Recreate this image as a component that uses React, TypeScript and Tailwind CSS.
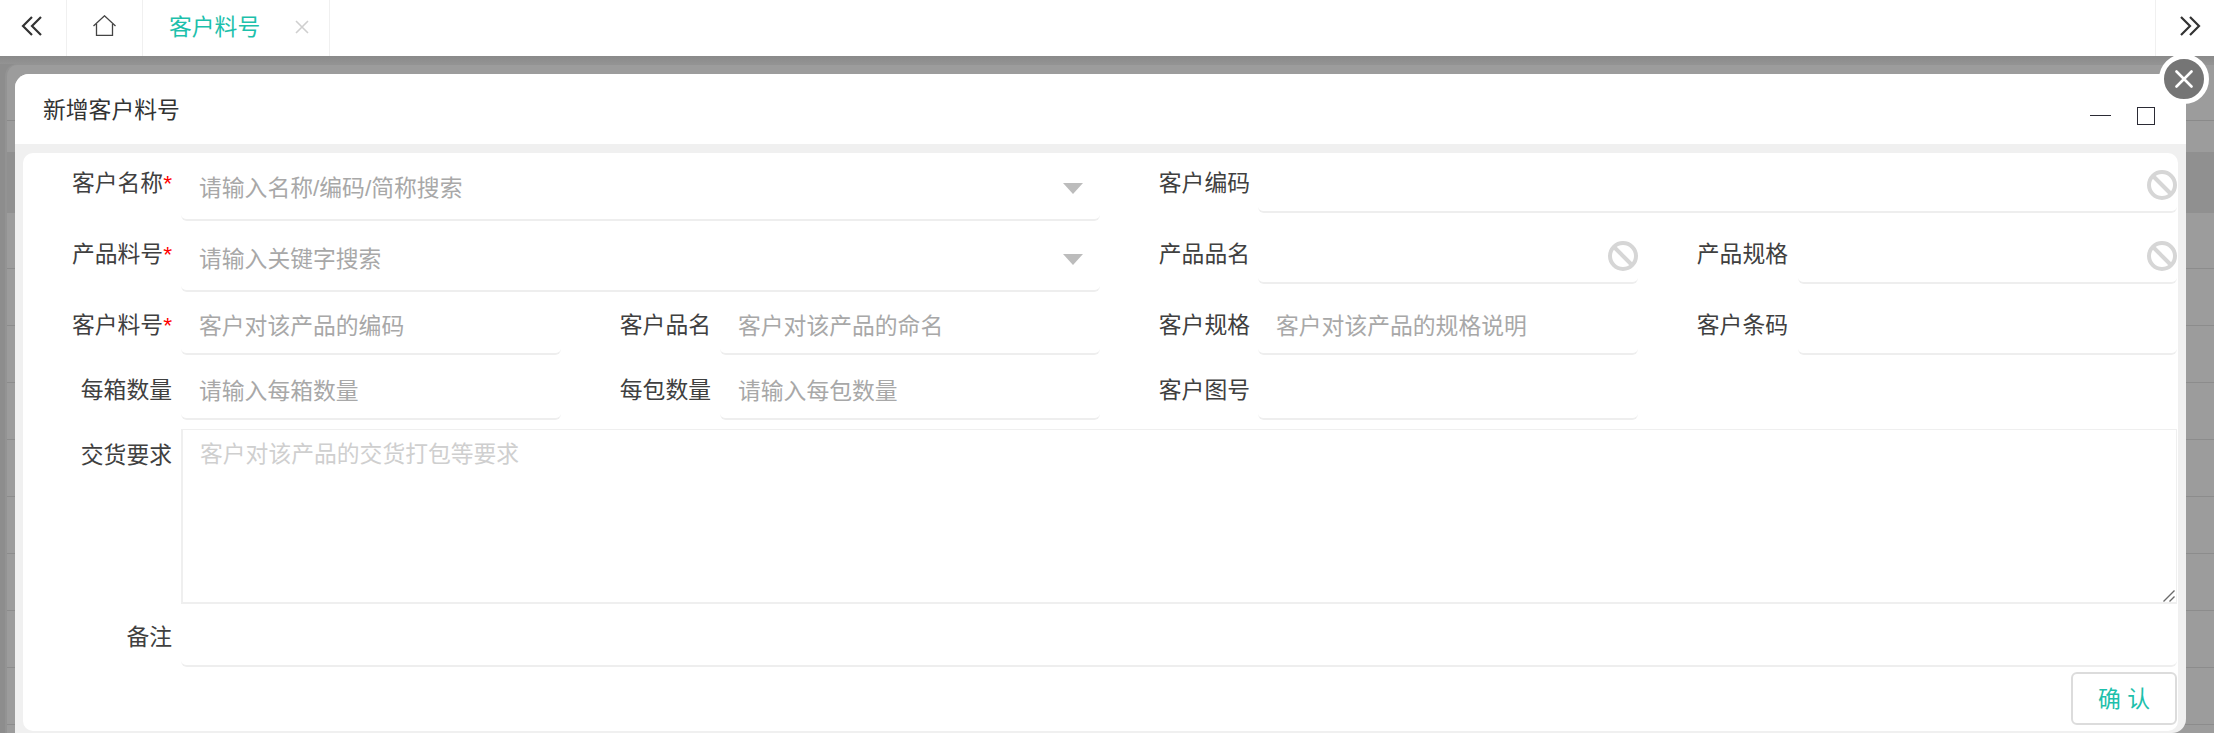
import React from "react";

const inputCls =
  "w-full min-w-0 flex-1 bg-transparent outline-none text-[22.8px] leading-[32px] h-[32px] text-[#333] placeholder:text-[#a8a8a8]";

function Label({ text, star, className }: { text: string; star?: boolean; className: string }) {
  return (
    <div className={"shrink-0 text-right text-[22.8px] leading-[32px] text-[#404040] " + className}>
      {text}
      {star && <span className="text-[#f00] font-['Liberation_Sans',sans-serif]">*</span>}
    </div>
  );
}

function Forbidden({ className }: { className: string }) {
  return (
    <svg viewBox="0 0 30 30" className={"w-[30px] h-[30px] shrink-0 " + className} fill="none" stroke="#d6d6d6" strokeWidth="4">
      <circle cx="15" cy="15" r="13" />
      <path d="M6 6 L24 24" />
    </svg>
  );
}

function Caret({ className }: { className: string }) {
  return (
    <svg viewBox="0 0 20 11" className={"w-[20px] h-[11px] shrink-0 mr-[17px] " + className} fill="#bcbcbc">
      <path d="M0 0 H20 L10 11 Z" />
    </svg>
  );
}

function Field({ className, children }: { className: string; children: React.ReactNode }) {
  return <div className={"flex items-start border-b-2 border-[#eeeeee] rounded-b-md " + className}>{children}</div>;
}

function Chevrons({ dir }: { dir: "l" | "r" }) {
  return (
    <svg viewBox="0 0 21 20" className="w-[21px] h-[20px]" fill="none" stroke="#333" strokeWidth="2.2">
      {dir === "l" ? (
        <>
          <path d="M11 1 L2 10 L11 19" />
          <path d="M20 1 L11 10 L20 19" />
        </>
      ) : (
        <>
          <path d="M1 1 L10 10 L1 19" />
          <path d="M10 1 L19 10 L10 19" />
        </>
      )}
    </svg>
  );
}

function Backdrop() {
  return (
    <div className="flex-1 flex flex-col bg-[#8d8d8d] overflow-hidden">
      <div className="h-[8px] shrink-0 bg-linear-to-b from-[#8a8a8a] to-[#939393]" />
      <div className="flex-1 ml-[5px] rounded-tl-[12px] bg-[#9c9c9c] border-l-2 border-t border-[#939393]">
        <div className="h-[56px] border-b border-[#8a8a8a]" />
        <div className="h-[31px]" />
        <div className="h-[61px] bg-[#909090]" />
        {[0, 1, 2, 3, 4, 5, 6, 7, 8].map((i) => (
          <div key={i} className={"border-b border-[#8c8c8c] " + (i === 0 ? "h-[56px]" : "h-[57px]")} />
        ))}
      </div>
    </div>
  );
}

export default function App() {
  return (
    <div className="relative w-[2214px] h-[733px] overflow-hidden flex flex-col bg-white font-['Liberation_Sans','Noto_Sans_CJK_SC',sans-serif]">
      {/* tab bar */}
      <div className="h-[56px] shrink-0 flex bg-white">
        <div className="w-[67px] pl-[21px] pb-[5px] flex items-center border-r border-[#f0f0f0]">
          <Chevrons dir="l" />
        </div>
        <div className="w-[76px] pl-[26px] pb-[5px] flex items-center border-r border-[#f0f0f0]">
          <svg viewBox="0 0 23 21" className="w-[23px] h-[21px]" fill="none" stroke="#444" strokeWidth="1.3">
            <path d="M0.5 11 L11.5 0.8 L22.5 11" />
            <path d="M3.5 9 V20.3 H19.5 V9" />
          </svg>
        </div>
        <div className="w-[187px] pl-[26px] pb-[3px] flex items-center border-r border-[#f0f0f0]">
          <span className="text-[22.8px] leading-[30px] text-[#1dc0ab] w-[126px]">客户料号</span>
          <svg viewBox="0 0 14 14" className="w-[14px] h-[14px]" fill="none" stroke="#cfcfcf" strokeWidth="1.6">
            <path d="M1 1 L13 13 M13 1 L1 13" />
          </svg>
        </div>
        <div className="flex-1" />
        <div className="w-[59px] pl-[24px] pb-[5px] flex items-center border-l border-[#f0f0f0]">
          <Chevrons dir="r" />
        </div>
      </div>

      <Backdrop />

      {/* dialog */}
      <div className="absolute left-[15px] top-[74px] w-[2171px] h-[659px] bg-[#f0f0f0] rounded-t-[14px] rounded-br-[14px] flex flex-col">
        <div className="h-[70px] shrink-0 bg-white rounded-t-[14px] flex justify-between pl-[28px] pr-[31px]">
          <div className="pt-[21px] text-[22.8px] leading-[30px] text-[#333]">新增客户料号</div>
          <div className="flex items-start gap-[26px]">
            <div className="w-[21px] h-px mt-[41px] bg-[#2b2b35]" />
            <div className="w-[18px] h-[18px] mt-[33px] border border-[#2b2b35]" />
          </div>
        </div>

        <div className="mt-[9px] mx-[8px] h-[578px] bg-white rounded-[10px] flex flex-col">
          <div className="flex">
            {/* left half */}
            <div className="w-[1077px] shrink-0 flex flex-col">
              <div className="flex h-[68px]">
                <Label text="客户名称" star className="w-[149px] mr-[9px] pt-[14px]" />
                <Field className="flex-1 pl-[18px]">
                  <input className={inputCls + " mt-[19px]"} placeholder="请输入名称/编码/简称搜索" />
                  <Caret className="mt-[30px]" />
                </Field>
              </div>
              <div className="flex h-[71px]">
                <Label text="产品料号" star className="w-[149px] mr-[9px] pt-[17px]" />
                <Field className="flex-1 pl-[18px]">
                  <input className={inputCls + " mt-[22px]"} placeholder="请输入关键字搜索" />
                  <Caret className="mt-[33px]" />
                </Field>
              </div>
              <div className="flex h-[63px]">
                <Label text="客户料号" star className="w-[149px] mr-[9px] pt-[17px]" />
                <Field className="w-[380px] pl-[18px]">
                  <input className={inputCls + " mt-[18px]"} placeholder="客户对该产品的编码" />
                </Field>
                <Label text="客户品名" className="w-[150px] mr-[9px] pt-[17px]" />
                <Field className="w-[380px] pl-[18px]">
                  <input className={inputCls + " mt-[18px]"} placeholder="客户对该产品的命名" />
                </Field>
              </div>
              <div className="flex h-[65px]">
                <Label text="每箱数量" className="w-[149px] mr-[9px] pt-[19px]" />
                <Field className="w-[380px] pl-[18px]">
                  <input className={inputCls + " mt-[20px]"} placeholder="请输入每箱数量" />
                </Field>
                <Label text="每包数量" className="w-[150px] mr-[9px] pt-[19px]" />
                <Field className="w-[380px] pl-[18px]">
                  <input className={inputCls + " mt-[20px]"} placeholder="请输入每包数量" />
                </Field>
              </div>
            </div>

            {/* right half */}
            <div className="flex-1 flex flex-col">
              <div className="flex h-[60px]">
                <Label text="客户编码" className="w-[150px] mr-[8px] pt-[14px]" />
                <Field className="w-[919px] pl-[18px] justify-end">
                  <Forbidden className="mt-[17px]" />
                </Field>
              </div>
              <div className="flex h-[71px]">
                <Label text="产品品名" className="w-[150px] mr-[8px] pt-[25px]" />
                <Field className="w-[380px] justify-end">
                  <Forbidden className="mt-[28px]" />
                </Field>
                <Label text="产品规格" className="w-[150px] mr-[10px] pt-[25px]" />
                <Field className="w-[379px] justify-end">
                  <Forbidden className="mt-[28px]" />
                </Field>
              </div>
              <div className="flex h-[71px]">
                <Label text="客户规格" className="w-[150px] mr-[8px] pt-[25px]" />
                <Field className="w-[380px] pl-[18px]">
                  <input className={inputCls + " mt-[26px]"} placeholder="客户对该产品的规格说明" />
                </Field>
                <Label text="客户条码" className="w-[150px] mr-[10px] pt-[25px]" />
                <Field className="w-[379px]">
                  <input className={inputCls + " mt-[26px]"} />
                </Field>
              </div>
              <div className="flex h-[65px]">
                <Label text="客户图号" className="w-[150px] mr-[8px] pt-[19px]" />
                <Field className="w-[380px]">
                  <input className={inputCls + " mt-[20px]"} />
                </Field>
              </div>
            </div>
          </div>

          {/* requirements */}
          <div className="flex mt-[9px] h-[175px]">
            <Label text="交货要求" className="w-[149px] mr-[9px] pt-[10px]" />
            <div className="relative">
              <textarea
                className="block w-[1996px] h-[175px] resize-none border-2 border-[#efefef] border-r border-t pl-[17px] pt-[9px] outline-none text-[22.8px] leading-[30px] text-[#333] placeholder:text-[#cfcfcf]"
                placeholder="客户对该产品的交货打包等要求"
              />
              <svg viewBox="0 0 12 12" className="absolute right-[2px] bottom-[2px] w-[12px] h-[12px]" fill="none" stroke="#6a6a6a" strokeWidth="1.4">
                <path d="M0.5 11.5 L11.5 0.5 M6.5 11.5 L11.5 6.5" />
              </svg>
            </div>
          </div>

          {/* notes */}
          <div className="flex h-[63px]">
            <Label text="备注" className="w-[149px] mr-[9px] pt-[17px]" />
            <Field className="w-[1996px]">
              <input className={inputCls + " mt-[18px]"} />
            </Field>
          </div>

          {/* footer */}
          <div className="flex justify-end pr-px pt-[5px]">
            <button className="w-[106px] h-[53px] border-2 border-[#dcdcdc] rounded-md bg-white text-[22.8px] leading-[30px] text-[#1dc0ab]">
              确 认
            </button>
          </div>
        </div>
      </div>

      {/* close */}
      <button className="absolute left-[2159px] top-[54px] w-[50px] h-[50px] rounded-full border-[5px] border-white bg-[#757575] flex items-center justify-center">
        <svg viewBox="0 0 18 18" className="w-[18px] h-[18px]" fill="none" stroke="#fff" strokeWidth="2.6" strokeLinecap="round">
          <path d="M1.5 1.5 L16.5 16.5 M16.5 1.5 L1.5 16.5" />
        </svg>
      </button>
    </div>
  );
}
